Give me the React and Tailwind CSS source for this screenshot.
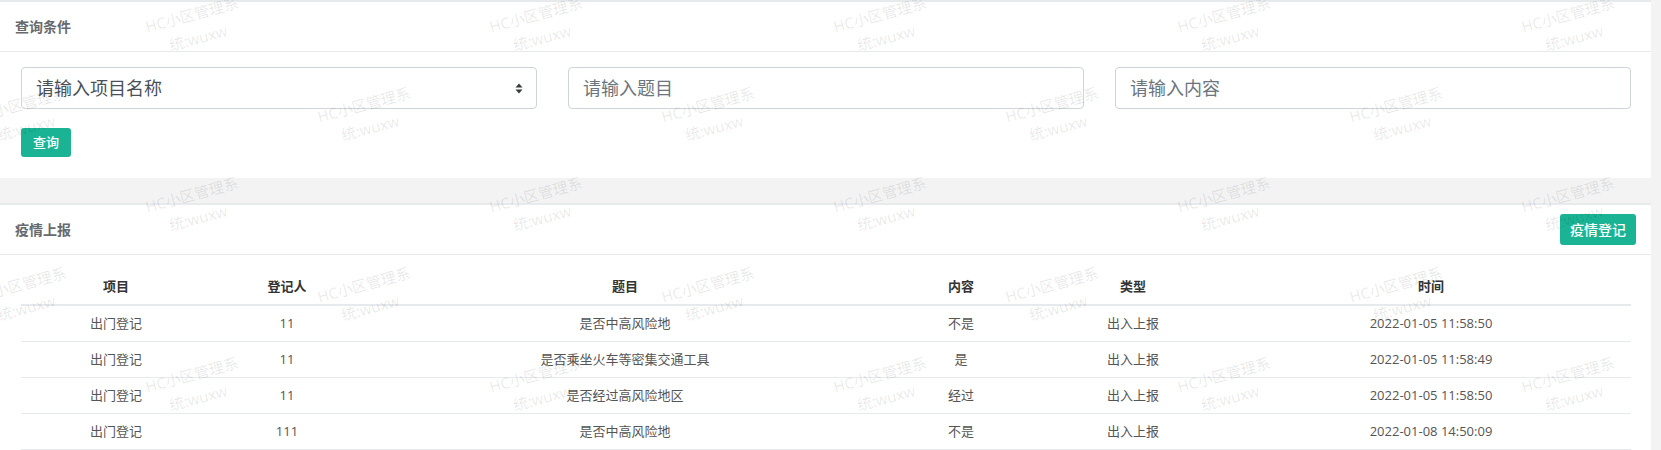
import React from 'react';

const FONT = { fontFamily: '"Open Sans", "Noto Sans CJK SC", sans-serif' };

const rows = [
  { project: '出门登记', person: '11', title: '是否中高风险地', content: '不是', type: '出入上报', time: '2022-01-05 11:58:50' },
  { project: '出门登记', person: '11', title: '是否乘坐火车等密集交通工具', content: '是', type: '出入上报', time: '2022-01-05 11:58:49' },
  { project: '出门登记', person: '11', title: '是否经过高风险地区', content: '经过', type: '出入上报', time: '2022-01-05 11:58:50' },
  { project: '出门登记', person: '111', title: '是否中高风险地', content: '不是', type: '出入上报', time: '2022-01-08 14:50:09' }
];

const columns = [
  { key: 'project', label: '项目', width: 'w-[190px]' },
  { key: 'person', label: '登记人', width: 'w-[152px]' },
  { key: 'title', label: '题目', width: 'w-[524px]' },
  { key: 'content', label: '内容', width: 'w-[148px]' },
  { key: 'type', label: '类型', width: 'w-[196px]' },
  { key: 'time', label: '时间', width: 'w-[400px]' }
];

// watermark grid: rows every 90px, columns every 344px, odd rows shifted left by 172px
const watermarks = [];
for (let r = 0; r < 5; r++) {
  for (let c = 0; c < 6; c++) {
    const x = (r % 2 === 0 ? 195 : 23) + c * 344;
    const y = 26 + r * 90;
    if (x < 1760) watermarks.push({ x, y, key: `${r}-${c}` });
  }
}

function SortArrows() {
  return (
    <svg width="8" height="11" viewBox="0 0 8 11" className="text-[#343a40]">
      <path d="M4 0.5 L7.5 4.5 H0.5 Z" fill="currentColor" />
      <path d="M4 10.5 L7.5 6.5 H0.5 Z" fill="currentColor" />
    </svg>
  );
}

function PanelTitle({ title, children }) {
  return (
    <div className="flex h-[50px] items-center justify-between border-b border-[#e7eaec] pl-[15px] pr-[15px]">
      <h5 className="text-[14px] font-semibold text-[#676a6c]">{title}</h5>
      {children}
    </div>
  );
}

export default function App() {
  return (
    <div className="relative min-h-[450px] overflow-hidden bg-[#f3f3f4] pr-[10px]" style={FONT}>
      <div className="border-t-2 border-[#e7eaec] bg-white">
        <PanelTitle title="查询条件" />
        <div className="pl-[21px] pr-[20px] pt-[15px] pb-[21px]">
          <div className="grid grid-cols-3 gap-[31px]">
            <div className="flex h-[42px] items-center justify-between rounded-[4px] border border-[#ced4da] pl-[14px] pr-[13px]">
              <span className="text-[18px] text-[#495057]">请输入项目名称</span>
              <SortArrows />
            </div>
            <input
              className="h-[42px] rounded-[4px] border border-[#ced4da] px-[14px] text-[18px] text-[#495057] outline-none placeholder:text-[#6c757d]"
              placeholder="请输入题目"
            />
            <input
              className="h-[42px] rounded-[4px] border border-[#ced4da] px-[14px] text-[18px] text-[#495057] outline-none placeholder:text-[#6c757d]"
              placeholder="请输入内容"
            />
          </div>
          <button
            type="button"
            className="mt-[19px] flex h-[29px] w-[50px] items-center justify-center rounded-[3px] bg-[#1ab394] text-[13px] font-medium text-white"
          >
            查询
          </button>
        </div>
      </div>

      <div className="mt-[25px] border-t-2 border-[#e7eaec] bg-white">
        <PanelTitle title="疫情上报">
          <button
            type="button"
            className="flex h-[31px] w-[76px] items-center justify-center rounded-[3px] bg-[#1ab394] text-[14px] font-medium text-white"
          >
            疫情登记
          </button>
        </PanelTitle>
        <div className="pl-[21px] pr-[20px] pt-[14px] pb-[20px]">
          <table className="w-[1610px] table-fixed border-collapse text-[13px]">
            <thead>
              <tr className="border-b-2 border-[#e7eaec]">
                {columns.map((col) => (
                  <th key={col.key} className={`${col.width} py-[8px] text-center font-bold leading-[19px] text-[#333]`}>
                    {col.label}
                  </th>
                ))}
              </tr>
            </thead>
            <tbody>
              {rows.map((row, i) => (
                <tr key={i} className="border-b border-[#e7eaec]">
                  {columns.map((col) => (
                    <td key={col.key} className="py-[8px] text-center leading-[19px] text-[#555]">
                      {row[col.key]}
                    </td>
                  ))}
                </tr>
              ))}
            </tbody>
          </table>
        </div>
      </div>

      <div className="pointer-events-none absolute inset-0">
        {watermarks.map((w) => (
          <div
            key={w.key}
            className="absolute whitespace-nowrap text-center text-[15px] leading-[24px] text-black/10"
            style={{ left: w.x, top: w.y, transform: 'translate(-50%, -50%) rotate(-15deg)' }}
          >
            <div>HC小区管理系</div>
            <div>统:wuxw</div>
          </div>
        ))}
      </div>
    </div>
  );
}
